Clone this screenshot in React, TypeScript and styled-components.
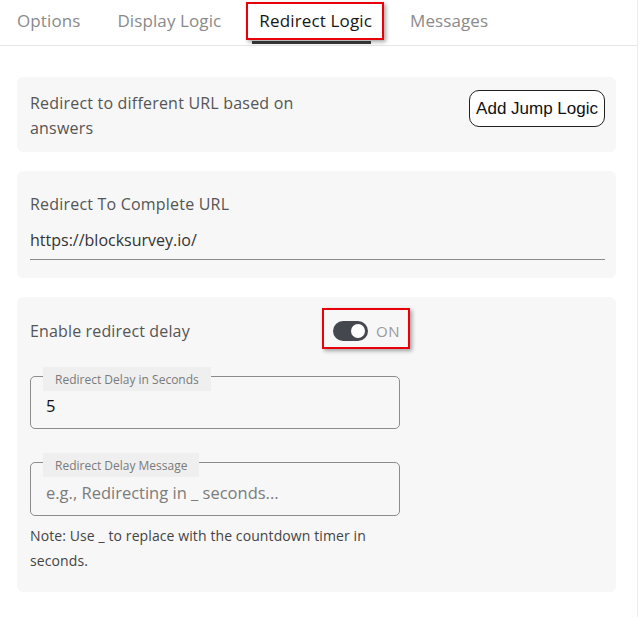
import React from "react";
import styled, { createGlobalStyle } from "styled-components";

const Global = createGlobalStyle`
  html, body { margin: 0; padding: 0; background: #fff; }
  body { font-family: "Open Sans", "Noto Sans", sans-serif; }
  * { box-sizing: border-box; }
`;

const Page = styled.div`
  width: 638px;
  min-height: 617px;
  border-right: 1px solid #ececec;
  display: flex;
  flex-direction: column;
`;

const TabBar = styled.div`
  display: flex;
  align-items: flex-end;
  height: 46px;
  border-bottom: 1px solid #e6e6e6;
`;

const TabItem = styled.div<{ $active?: boolean }>`
  position: relative;
  height: 45px;
  padding: 0 21px 0 17px;
  display: flex;
  align-items: center;
  padding-bottom: 4px;
  font-size: 17px;
  color: ${(p) => (p.$active ? "#161616" : "#8a8a8a")};
  font-weight: ${(p) => (p.$active ? 500 : 400)};
  letter-spacing: ${(p) => (p.$active ? "0.15px" : "0.1px")};
  white-space: nowrap;
  &:first-child {
    padding-right: 20px;
  }
`;

const TabUnderline = styled.span`
  position: absolute;
  left: 10px;
  right: 22px;
  bottom: 1px;
  height: 3px;
  background: #3d3d3d;
`;

const Annotation = styled.span`
  position: absolute;
  border: 2px solid #e8000b;
  box-shadow: 2px 2px 4px rgba(0, 0, 0, 0.35);
  pointer-events: none;
`;

const Content = styled.div`
  display: flex;
  flex-direction: column;
  gap: 19px;
  padding: 31px 21px 0 17px;
`;

const Card = styled.div`
  background: #f7f7f7;
  border-radius: 6px;
`;

const JumpCard = styled(Card)`
  display: flex;
  justify-content: space-between;
  align-items: flex-start;
  padding: 14px 11px 11px 13px;
`;

const CardText = styled.div`
  width: 285px;
  font-size: 16px;
  line-height: 25px;
  color: #555;
  letter-spacing: 0.2px;
`;

const OutlineButton = styled.button`
  margin-top: -1px;
  height: 37px;
  padding: 0 6px;
  border: 1px solid #222;
  border-radius: 10px;
  background: #fff;
  font-family: "Liberation Sans", Arial, sans-serif;
  font-size: 17px;
  color: #111;
  cursor: pointer;
`;

const UrlCard = styled(Card)`
  padding: 21px 11px 18px 13px;
  display: flex;
  flex-direction: column;
`;

const FieldLabel = styled.div`
  font-size: 16px;
  line-height: 25px;
  color: #555;
  letter-spacing: 0.2px;
`;

const UnderlineInput = styled.div`
  margin-top: 11px;
  padding-bottom: 6px;
  border-bottom: 1px solid #8a8a8a;
  font-size: 16px;
  line-height: 25px;
  color: #333;
`;

const DelayCard = styled(Card)`
  padding: 21px 0 19px 13px;
  display: flex;
  flex-direction: column;
`;

const ToggleRow = styled.div`
  width: 370px;
  display: flex;
  justify-content: space-between;
  align-items: center;
  height: 25px;
`;

const RowLabel = styled.span`
  font-size: 16px;
  color: #555;
  letter-spacing: 0.15px;
`;

const SwitchWrap = styled.div`
  position: relative;
  display: flex;
  align-items: center;
  gap: 8px;
`;

const Track = styled.span<{ $on: boolean }>`
  width: 35px;
  height: 20px;
  border-radius: 10px;
  background: ${(p) => (p.$on ? "#45474e" : "#bbb")};
  display: flex;
  align-items: center;
  justify-content: ${(p) => (p.$on ? "flex-end" : "flex-start")};
  padding: 0 3px;
`;

const Knob = styled.span`
  width: 14px;
  height: 14px;
  border-radius: 50%;
  background: #fff;
`;

const SwitchText = styled.span`
  font-size: 15px;
  color: #9a9a9a;
  letter-spacing: 0.5px;
`;

const OutlinedField = styled.div<{ $top: number; $h: number }>`
  position: relative;
  width: 370px;
  height: ${(p) => p.$h}px;
  margin-top: ${(p) => p.$top}px;
  border: 1px solid #8c8c8c;
  border-radius: 5px;
  display: flex;
  align-items: center;
  padding: 6px 15px 0;
`;

const Legend = styled.span`
  position: absolute;
  top: -10px;
  left: 12px;
  height: 24px;
  padding: 0 12px;
  display: flex;
  align-items: center;
  background: #efefef;
  font-size: 12px;
  color: #7a7a7a;
  white-space: nowrap;
`;

const FieldValue = styled.span<{ $placeholder?: boolean }>`
  font-size: 16.5px;
  color: ${(p) => (p.$placeholder ? "#7c7c7c" : "#111")};
`;

const Note = styled.div`
  margin-top: 7px;
  width: 370px;
  font-size: 14px;
  line-height: 25px;
  color: #444;
  letter-spacing: 0.1px;
`;

const tabs = ["Options", "Display Logic", "Redirect Logic", "Messages"];

export default function App() {
  return (
    <>
      <Global />
      <Page>
        <TabBar>
          {tabs.map((t) => {
            const active = t === "Redirect Logic";
            return (
              <TabItem key={t} $active={active}>
                {t}
                {active && <TabUnderline />}
                {active && (
                  <Annotation style={{ left: 4, right: 9, top: 2, bottom: 5 }} />
                )}
              </TabItem>
            );
          })}
        </TabBar>
        <Content>
          <JumpCard>
            <CardText>Redirect to different URL based on answers</CardText>
            <OutlineButton>Add Jump Logic</OutlineButton>
          </JumpCard>
          <UrlCard>
            <FieldLabel>Redirect To Complete URL</FieldLabel>
            <UnderlineInput>https://blocksurvey.io/</UnderlineInput>
          </UrlCard>
          <DelayCard>
            <ToggleRow>
              <RowLabel>Enable redirect delay</RowLabel>
              <SwitchWrap>
                <Track $on>
                  <Knob />
                </Track>
                <SwitchText>ON</SwitchText>
                <Annotation style={{ left: -11, right: -10, top: -13, bottom: -8 }} />
              </SwitchWrap>
            </ToggleRow>
            <OutlinedField $top={33} $h={53}>
              <Legend>Redirect Delay in Seconds</Legend>
              <FieldValue>5</FieldValue>
            </OutlinedField>
            <OutlinedField $top={33} $h={54}>
              <Legend>Redirect Delay Message</Legend>
              <FieldValue $placeholder>e.g., Redirecting in _ seconds...</FieldValue>
            </OutlinedField>
            <Note>Note: Use _ to replace with the countdown timer in seconds.</Note>
          </DelayCard>
        </Content>
      </Page>
    </>
  );
}
